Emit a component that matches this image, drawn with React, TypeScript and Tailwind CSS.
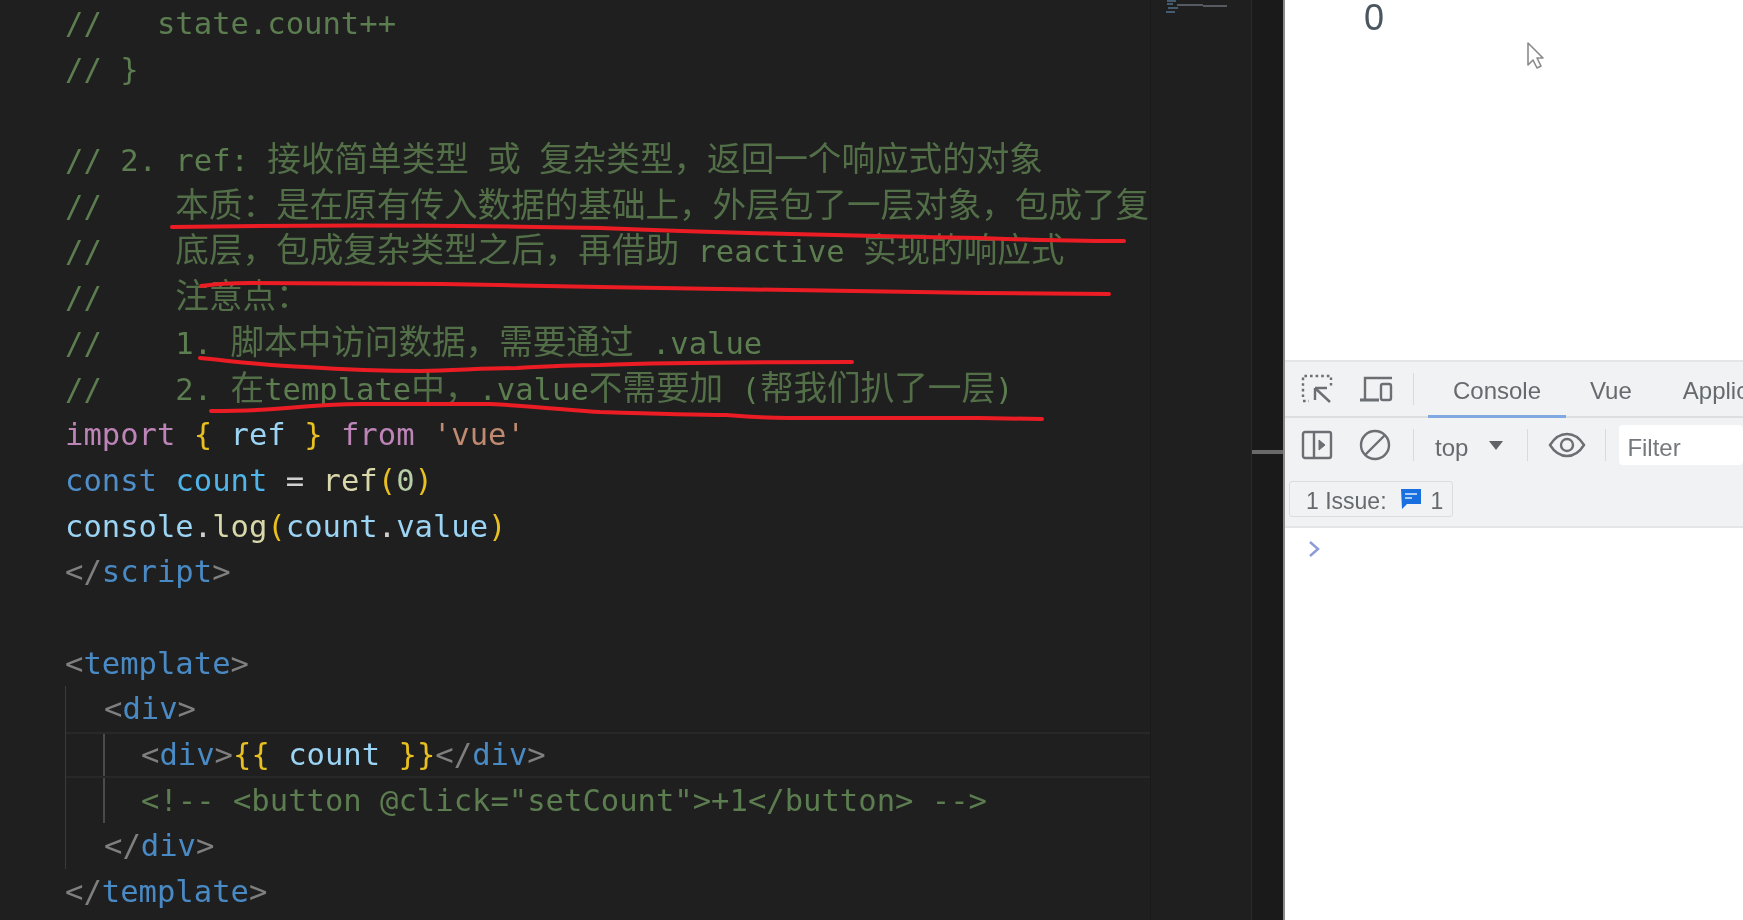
const c = {
  comment: "text-[#5c7d50]",
  gray: "text-[#7f7f7f]",
  tag: "text-[#4a8ac4]",
  purple: "text-[#bd84b8]",
  gold: "text-[#e8c020]",
  light: "text-[#9cd4f4]",
  str: "text-[#c08a70]",
  blue: "text-[#4f8ec8]",
  cyan: "text-[#4fb4e8]",
  fn: "text-[#d8d8aa]",
  num: "text-[#b5cea8]",
  plain: "text-[#d0d0d0]",
};

type Token = [string, string];

function Code({ tokens }: { tokens: Token[] }) {
  return (
    <div className="h-[45.7px] whitespace-pre leading-[45.7px]">
      {tokens.map(([text, color], i) => (
        <span key={i} className={color}>
          {text.split(/([\u3000-\u9fff\uff00-\uffef]+)/).map((part, j) =>
            j % 2 === 1 ? (
              <span key={j} className="font-['Noto_Sans_CJK_SC',sans-serif] text-[33.6px] leading-[0] opacity-85">
                {part}
              </span>
            ) : (
              part
            )
          )}
        </span>
      ))}
    </div>
  );
}

const comment = (text: string): Token[] => [[text, c.comment]];

const tag = (name: string, close = false): Token[] => [
  [close ? "</" : "<", c.gray],
  [name, c.tag],
  [">", c.gray],
];

function InspectIcon() {
  return (
    <svg width="32" height="32" viewBox="0 0 32 32" fill="none" stroke="#6b6f73" strokeWidth="2.4">
      <path d="M2 24V3h28v11" strokeDasharray="2.6 3" />
      <path d="M2 28h6" strokeDasharray="2.6 3" />
      <path d="M14 15h12M14 15v12M15 16l14 13" />
    </svg>
  );
}

function DeviceIcon() {
  return (
    <svg width="34" height="28" viewBox="0 0 34 28" fill="none" stroke="#6b6f73" strokeWidth="2.4">
      <path d="M6 24V3h27" />
      <path d="M1 25h19" strokeWidth="3" />
      <rect x="22" y="9" width="10" height="16" rx="2" />
    </svg>
  );
}

function SidebarIcon() {
  return (
    <svg width="32" height="32" viewBox="0 0 32 32" fill="none" stroke="#6b6f73" strokeWidth="2.4">
      <rect x="2" y="3" width="28" height="26" rx="2" />
      <path d="M13 3v26" />
      <path d="M18 11l6 5-6 5z" fill="#6b6f73" strokeWidth="1" />
    </svg>
  );
}

function BlockIcon() {
  return (
    <svg width="32" height="32" viewBox="0 0 32 32" fill="none" stroke="#6b6f73" strokeWidth="2.4">
      <circle cx="16" cy="16" r="14" />
      <path d="M6 26L26 6" />
    </svg>
  );
}

function EyeIcon() {
  return (
    <svg width="38" height="26" viewBox="0 0 38 26" fill="none" stroke="#6b6f73" strokeWidth="2.4">
      <path d="M2 13C7 5 13 2 19 2s12 3 17 11c-5 8-11 11-17 11S7 21 2 13z" />
      <circle cx="19" cy="13" r="6" />
    </svg>
  );
}

function Sep({ className }: { className: string }) {
  return <div className={`h-[32px] w-px shrink-0 bg-[#d8dadc] ${className}`} />;
}

export default function App() {
  return (
    <div className="relative flex h-[920px] w-[1743px] overflow-hidden bg-[#1f1f1f] blur-[0.6px]">
      {/* editor */}
      <div className="h-full w-[1150px] shrink-0 overflow-hidden pt-px font-['DejaVu_Sans_Mono',monospace] text-[30.55px]">
        <div className="pl-[65px]">
          <Code tokens={comment("//   state.count++")} />
          <Code tokens={comment("// }")} />
          <Code tokens={[]} />
          <Code tokens={comment("// 2. ref: 接收简单类型 或 复杂类型\uff0c返回一个响应式的对象")} />
          <Code tokens={comment("//    本质\uff1a是在原有传入数据的基础上\uff0c外层包了一层对象\uff0c包成了复")} />
          <Code tokens={comment("//    底层\uff0c包成复杂类型之后\uff0c再借助 reactive 实现的响应式")} />
          <Code tokens={comment("//    注意点\uff1a")} />
          <Code tokens={comment("//    1. 脚本中访问数据\uff0c需要通过 .value")} />
          <Code tokens={comment("//    2. 在template中\uff0c.value不需要加 (帮我们扒了一层)")} />
          <Code
            tokens={[
              ["import", c.purple],
              [" ", c.plain],
              ["{", c.gold],
              [" ref ", c.light],
              ["}", c.gold],
              [" ", c.plain],
              ["from", c.purple],
              [" ", c.plain],
              ["'vue'", c.str],
            ]}
          />
          <Code
            tokens={[
              ["const", c.blue],
              [" ", c.plain],
              ["count", c.cyan],
              [" = ", c.plain],
              ["ref", c.fn],
              ["(", c.gold],
              ["0", c.num],
              [")", c.gold],
            ]}
          />
          <Code
            tokens={[
              ["console", c.light],
              [".", c.plain],
              ["log", c.fn],
              ["(", c.gold],
              ["count", c.light],
              [".", c.plain],
              ["value", c.light],
              [")", c.gold],
            ]}
          />
          <Code tokens={tag("script", true)} />
          <Code tokens={[]} />
          <Code tokens={tag("template")} />
        </div>

        <div className="ml-[65px] border-l border-[#3a3a3a]">
          <div className="pl-[38px]">
            <Code tokens={tag("div")} />
          </div>
          <div className="relative">
            <div className="ml-[37px] border-l-2 border-[#4a4a4a] pl-[36px]">
              <Code
                tokens={[
                  ...tag("div"),
                  ["{{", c.gold],
                  [" count ", c.light],
                  ["}}", c.gold],
                  ...tag("div", true),
                ]}
              />
              <Code tokens={comment('<!-- <button @click="setCount">+1</button> -->')} />
            </div>
            <div className="absolute left-0 right-0 top-0 h-[45.7px] border-y-2 border-[#282828]" />
          </div>
          <div className="pl-[38px]">
            <Code tokens={tag("div", true)} />
          </div>
        </div>

        <div className="pl-[65px]">
          <Code tokens={tag("template", true)} />
        </div>
      </div>

      {/* minimap */}
      <div className="h-full w-[101px] shrink-0 border-l border-[#1a1a1a]">
        <svg width="70" height="14" viewBox="0 0 70 14" className="ml-[14px]">
          <path d="M2 1h9M2 4h6M3 8h10M1 12h9" stroke="#52708c" strokeWidth="1.5" />
          <path d="M12 5h26M38 6h24" stroke="#6a7078" strokeWidth="1.5" />
        </svg>
      </div>

      {/* overview ruler */}
      <div className="flex h-full w-[32px] shrink-0 flex-col border-l border-[#2a2a2a] bg-[#1a1a1a] pt-[450px]">
        <div className="h-[4px] bg-[#6a6a6a]" />
      </div>

      {/* browser */}
      <div className="flex h-full min-w-0 flex-1 flex-col border-l-2 border-[#8a8a8a] bg-white font-['Liberation_Sans',sans-serif]">
        <div className="h-[360px] shrink-0 pl-[79px]">
          <div className="text-[36px] leading-[36px] text-[#4b5660]">0</div>
        </div>

        <div className="overflow-hidden border-t-2 border-[#e3e5e7] bg-[#f0f2f3] text-[#666a6e]">
          <div className="flex h-[56px] items-center border-b-2 border-[#dcdee0]">
            <div className="ml-[16px] w-[32px] shrink-0">
              <InspectIcon />
            </div>
            <div className="ml-[26px] w-[34px] shrink-0">
              <DeviceIcon />
            </div>
            <Sep className="ml-[20px]" />
            <div className="relative ml-[14px] flex h-full w-[138px] shrink-0 items-center justify-center pt-[4px] text-[24px]">
              Console
              <div className="absolute bottom-[-2px] left-0 right-0 h-[3px] bg-[#7fa9e0]" />
            </div>
            <div className="ml-[24px] shrink-0 pt-[4px] text-[24px]">Vue</div>
            <div className="ml-[51px] shrink-0 whitespace-nowrap pt-[4px] text-[24px]">Application</div>
          </div>

          <div className="flex h-[54px] items-center">
            <div className="ml-[16px] w-[32px] shrink-0">
              <SidebarIcon />
            </div>
            <div className="ml-[26px] w-[32px] shrink-0">
              <BlockIcon />
            </div>
            <Sep className="ml-[22px]" />
            <div className="ml-[21px] pt-[5px] text-[24px]">top</div>
            <div className="ml-[21px] h-0 w-0 border-x-[7px] border-t-[9px] border-x-transparent border-t-[#5f6368]" />
            <Sep className="ml-[24px]" />
            <div className="ml-[20px] w-[38px] shrink-0">
              <EyeIcon />
            </div>
            <Sep className="ml-[19px]" />
            <div className="ml-[13px] flex h-[40px] flex-1 items-center rounded-sm bg-white pl-[8px] pt-[5px] text-[24px] text-[#75787c]">
              Filter
            </div>
          </div>

          <div className="flex h-[54px] items-start pl-[4px] pt-[9px]">
            <div className="flex h-[36px] w-[164px] items-center rounded-[3px] border border-[#dadcde] pl-[16px] pt-[5px] text-[23px]">
              1 Issue:
              <svg width="24" height="22" viewBox="0 0 24 22" className="ml-[12px] -mt-[6px]">
                <path d="M2 1h20v15H8l-5 5z" fill="#1a6fe0" />
                <path d="M6 6h12M6 10h7" stroke="#a8cdf8" strokeWidth="2" />
              </svg>
              <span className="ml-[8px]">1</span>
            </div>
          </div>
        </div>

        <div className="flex-1 border-t-2 border-[#e3e5e7] pl-[22px] pt-[12px]">
          <svg width="14" height="18" viewBox="0 0 14 18" fill="none" stroke="#8d9bd8" strokeWidth="2.4">
            <path d="M3 2l8 7-8 7" />
          </svg>
        </div>
      </div>

      {/* pen annotations and mouse pointer, drawn over the video */}
      <svg width="1743" height="920" viewBox="0 0 1743 920" fill="none" className="absolute left-0 top-0">
        <g stroke="#ec1c24" strokeWidth="4" strokeLinecap="round" strokeLinejoin="round">
          <path d="M172 227C300 225 450 225 600 228C726 233 852 236 979 238C1030 240 1080 241 1124 241" />
          <path d="M201 286C215 284 230 283 250 283L442 284C500 285 550 286 600 287C726 288 852 290 979 293L1109 294" />
          <path d="M200 358C240 362 270 366 306 367C350 370 385 371 421 371C460 370 490 368 517 368C550 366 575 365 600 365C680 362 780 362 852 362" />
          <path d="M211 411C240 411 265 410 287 408C320 405 340 404 364 404L490 404C530 406 570 410 600 412C660 414 700 415 726 415C750 417 770 418 789 418L979 418L1042 419" />
        </g>
        <path
          d="M1528 43L1528 65L1533 60L1537 68L1541 66L1537 58L1543 58Z"
          fill="#ffffff"
          stroke="#8a8a8a"
          strokeWidth="1.6"
          strokeLinejoin="round"
        />
      </svg>
    </div>
  );
}
